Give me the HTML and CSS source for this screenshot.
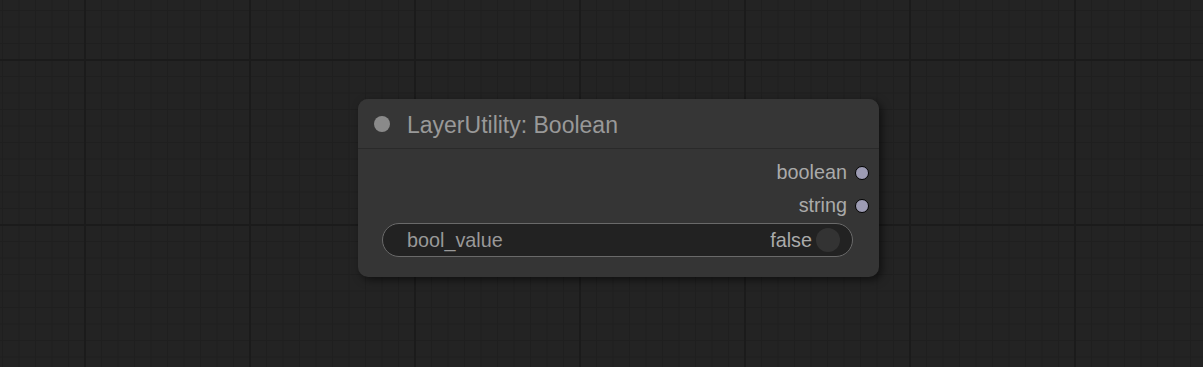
FILE: index.html
```html
<!DOCTYPE html>
<html lang="en">
<head>
    <meta charset="UTF-8">
    <meta name="viewport" content="width=device-width, initial-scale=1.0">
    <title>LayerUtility: Boolean</title>
    <link rel="stylesheet" href="styles.css">
</head>
<body>
    <div class="graph_canvas">
        <div class="node">
            <div class="node_title">
                <span class="title_dot"></span>
                <span class="title_text">LayerUtility: Boolean</span>
            </div>
            <div class="node_body">
                <div class="slot_row">
                    <span class="slot_label">boolean</span>
                    <span class="slot_dot"></span>
                </div>
                <div class="slot_row">
                    <span class="slot_label">string</span>
                    <span class="slot_dot"></span>
                </div>
                <div class="widget_toggle">
                    <span class="widget_name">bool_value</span>
                    <span class="widget_value">false</span>
                    <span class="toggle_knob"></span>
                </div>
            </div>
        </div>
    </div>
</body>
</html>
```

FILE: styles.css
```css
body{
    margin:0;
    background-color: #222222;
    font-family: "Liberation Sans", Arial, sans-serif;
}
.graph_canvas {
    width: 1203px;
    height: 367px;
    box-sizing: border-box;
    padding: 99px 0 0 358px;          /* ノードの位置 */
    background-color: #232323;
    background-image:
        linear-gradient(to right, #1b1b1b 0, #1b1b1b 2px, transparent 2px),
        linear-gradient(to bottom, #1b1b1b 0, #1b1b1b 2px, transparent 2px),
        linear-gradient(to right, #1f1f1f 0, #1f1f1f 1px, transparent 1px),
        linear-gradient(to bottom, #1f1f1f 0, #1f1f1f 1px, transparent 1px);
    background-size: 165px 165px, 165px 165px, 16.5px 16.5px, 16.5px 16.5px;
    background-position: 84px 59px, 84px 59px, 2px 10px, 2px 10px;
}

.node {
    width: 521px;
    height: 178px;
    background-color: #353535;
    border-radius: 10px;
    box-shadow: 3px 3px 8px rgba(0, 0, 0, 0.55);
    overflow: hidden;
}
.node_title {
    height: 50px;
    display: flex;
    align-items: center;
    padding-left: 16px;
    background-color: #363636;
    border-bottom: 1px solid #2a2a2a;
    box-sizing: border-box;
}
.title_dot {
    width: 16px;
    height: 16px;
    border-radius: 50%;
    background-color: #8a8a8a;
    margin-right: 17px;
}
.title_text {
    color: #999999;
    font-size: 23px;
    padding-top: 3px;
}

.node_body {
    padding: 7px 0 0 0;
}
.slot_row {
    height: 33px;
    display: flex;
    align-items: center;
    justify-content: flex-end;
    padding-right: 10px;
}
.slot_label {
    color: #aaaaaa;
    font-size: 19.8px;
    margin-right: 8px;
}
.slot_dot {
    flex-shrink: 0;
    width: 12px;
    height: 12px;
    border-radius: 50%;
    background-color: #9d9cb4;
    border: 1.5px solid #000000;
}

.widget_toggle {
    height: 34px;
    margin: 1px 26px 0 24px;
    box-sizing: border-box;
    border: 1.5px solid #6a6a6a;
    border-radius: 17px;
    background-color: #222222;
    display: flex;
    align-items: center;
    padding: 0 12px 0 24px;
}
.widget_name {
    color: #999999;
    font-size: 19.8px;
    flex: 1;
}
.widget_value {
    color: #aaaaaa;
    font-size: 19.8px;
    margin-right: 4px;
}
.toggle_knob {
    width: 24px;
    height: 24px;
    border-radius: 50%;
    background-color: #333333;
}
```
